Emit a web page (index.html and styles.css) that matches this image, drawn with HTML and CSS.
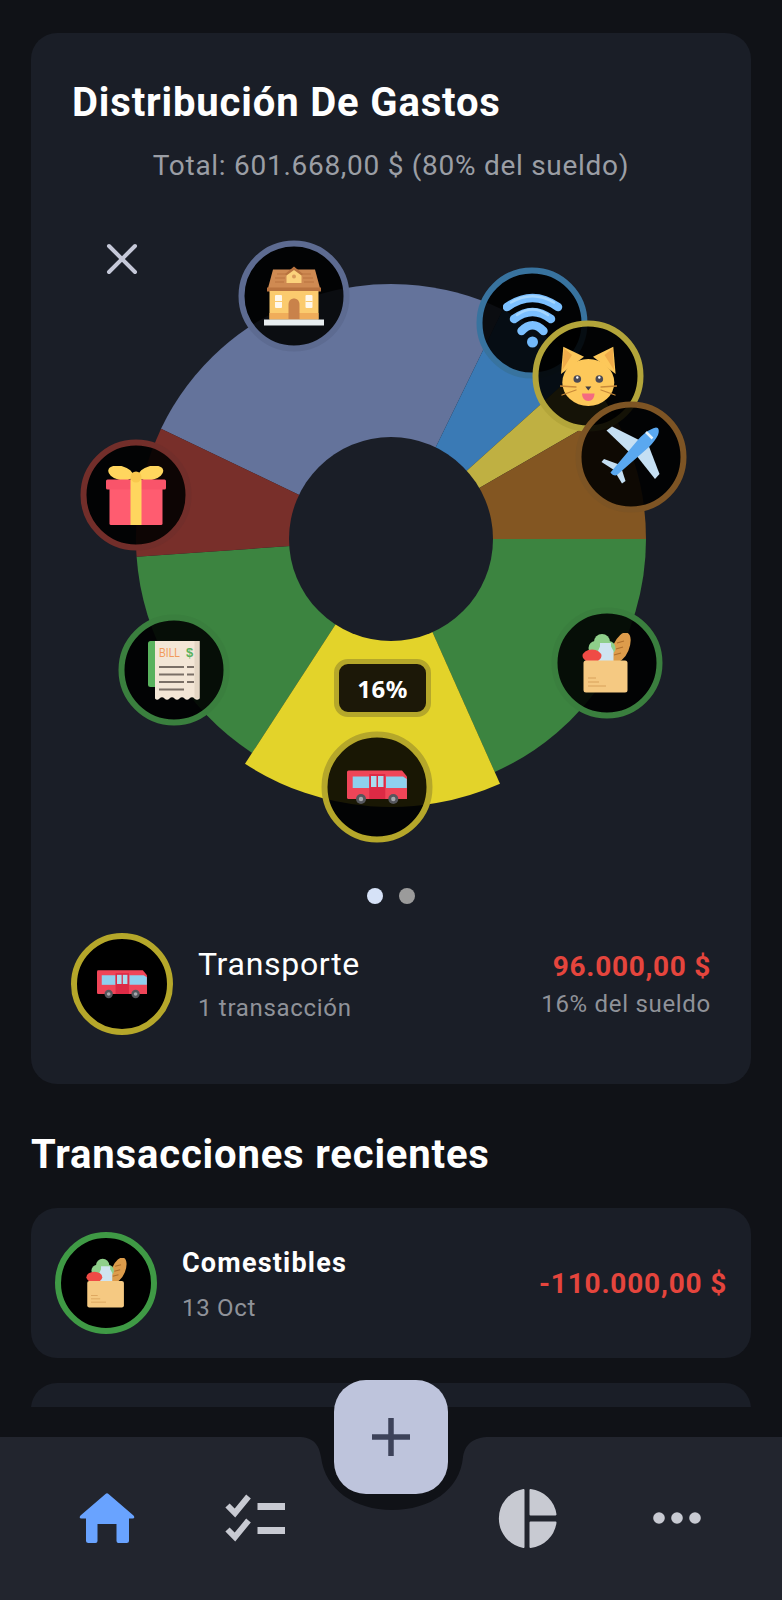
FILE: index.html
```html
<!DOCTYPE html>
<html lang="es">
<head>
<meta charset="utf-8">
<title>Distribución De Gastos</title>
<link rel="stylesheet" href="styles.css">
</head>
<body>
<svg class="defs" width="0" height="0" aria-hidden="true">
  <symbol id="i-house" viewBox="0 0 60 60">
    <path d="M9 3.500H51L56.500 24H3.500Z" fill="#cf8a52"/>
    <path d="M3 21.500H57V25.500H3Z" fill="#b9733f"/>
    <path d="M13 8H22M11 12H21M11 16H20M38 8H47M39 12H49M40 16H50" stroke="#b9733f" stroke-width="1.200"/>
    <rect x="5.500" y="25" width="49" height="28.500" fill="#fbcb6e"/>
    <rect x="5.500" y="47" width="49" height="6.500" fill="#f0ad5a"/>
    <path d="M22.500 17V7.500L30 1.500L37.500 7.500V17Z" fill="#fbd27c"/>
    <path d="M21 8L30 0.500L39 8L37.500 9.500L30 4L22.500 9.500Z" fill="#b9733f"/>
    <circle cx="30" cy="10.500" r="2" fill="#d99a5a"/>
    <path d="M24.500 53.500V38.500C24.500 30.500 35.500 30.500 35.500 38.500V53.500Z" fill="#c9824a"/>
    <rect x="11" y="29" width="7" height="13" rx="1" fill="#fff8ec"/>
    <rect x="41.500" y="29" width="7" height="13" rx="1" fill="#fff8ec"/>
    <path d="M11 35.500H18M41.500 35.500H48.500" stroke="#fbcb6e"/>
    <rect x="0" y="53.500" width="60" height="6" fill="#e8edf0"/>
  </symbol>
  <symbol id="i-gift" viewBox="0 0 60 60">
    <ellipse cx="14.500" cy="7" rx="12.500" ry="7" transform="rotate(14 14.500 7)" fill="#ffd65e"/>
    <ellipse cx="45" cy="7" rx="12.500" ry="7" transform="rotate(-14 45 7)" fill="#ffd65e"/>
    <rect x="3.500" y="22" width="53" height="37" rx="1.500" fill="#ff5c70"/>
    <rect x="0" y="13.500" width="60" height="10" rx="1.500" fill="#f9546a"/>
    <rect x="24.500" y="12" width="11" height="47" fill="#ffd65e"/>
    <circle cx="30" cy="11" r="5.500" fill="#f9c84e"/>
  </symbol>
  <symbol id="i-wifi" viewBox="0 0 60 60">
    <g fill="none" stroke="#7cc0ff" stroke-width="8.500" stroke-linecap="round">
      <path d="M4 17Q29.500 -1 55 17"/>
      <path d="M11 29Q29.500 15 48 29"/>
      <path d="M18.500 41Q29.500 29.500 40.500 41"/>
    </g>
    <g fill="none" stroke="#a4d6ff" stroke-width="2.500" stroke-linecap="round">
      <path d="M8 12.500Q29.500 0 51 12.500"/>
      <path d="M14 25Q29.500 14 45 25"/>
    </g>
    <circle cx="29.500" cy="52" r="5.500" fill="#72b9fb"/>
  </symbol>
  <symbol id="i-cat" viewBox="0 0 57 60">
    <path d="M3.300 0.700L1 28L24 10.700Z" fill="#fdc85a"/>
    <path d="M53.300 0.700L55.600 28L33 10.700Z" fill="#fdc85a"/>
    <path d="M3.800 2L2.500 24L12 9Z" fill="#f0ac4a"/>
    <path d="M52.800 2L54 24L44.500 9Z" fill="#f0ac4a"/>
    <ellipse cx="28.300" cy="36.500" rx="26" ry="23.500" fill="#fdc85a"/>
    <circle cx="17.300" cy="33" r="3.800" fill="#4b4a55"/>
    <circle cx="39.300" cy="33" r="3.800" fill="#4b4a55"/>
    <circle cx="17.300" cy="31.500" r="1.200" fill="#fff"/>
    <circle cx="39.300" cy="31.500" r="1.200" fill="#fff"/>
    <path d="M25.300 40.500H31.300L28.300 44.500Z" fill="#3d3b44"/>
    <path d="M22 47.500H34.500C34.500 52 32 55 28.300 55S22 52 22 47.500Z" fill="#f56a80"/>
    <path d="M16 41L0 40M16 44L2 49M41 41L56.500 40M41 44L55 49" stroke="#c98a3a" stroke-width="1.300" stroke-linecap="round"/>
  </symbol>
  <symbol id="i-plane" viewBox="0 0 60 60">
    <path d="M5.500 4.500L11 0.500L42 16L30 28Z" fill="#c5dff3"/>
    <path d="M35 29L47 18L58.500 48L54 53Z" fill="#c5dff3"/>
    <path d="M0.500 36L3 33L18 38.500L13 44Z" fill="#c5dff3"/>
    <path d="M14 46L20 41L24.500 55L21 57.500Z" fill="#c5dff3"/>
    <path d="M55 1.500C58 1.500 58.500 5 57 9C55 13 52 17 48 21L16 49C14 50 11 49 9.500 46.500L36 15C41 9 48 3 55 1.500Z" fill="#5aa8f0"/>
    <path d="M45 6L51.500 12.500" stroke="#e4f1fb" stroke-width="2.500"/>
  </symbol>
  <symbol id="i-groceries" viewBox="0 0 60 60">
    <ellipse cx="45" cy="14.500" rx="8" ry="16" transform="rotate(23 45 14.500)" fill="#dd9c4b"/>
    <path d="M41 10L48 8M40 16L47 14M38 22L45 20" stroke="#b0702c" stroke-width="1.300"/>
    <g fill="#8fcf8a">
      <circle cx="26" cy="9" r="8"/>
      <circle cx="19.500" cy="15" r="7"/>
      <circle cx="32.500" cy="15" r="7"/>
    </g>
    <path d="M24 10H35V13.500L37.500 18V29H22V18L24 13.500Z" fill="#cfe4f0"/>
    <ellipse cx="16" cy="23" rx="9.500" ry="6.500" fill="#ef4b45"/>
    <rect x="7.500" y="27.500" width="44" height="32" rx="2.500" fill="#f5c982"/>
    <path d="M12 45H20M12 49H23M12 53H30" stroke="#d8a15a" stroke-width="1"/>
  </symbol>
  <symbol id="i-bus" viewBox="0 0 60 60">
    <path d="M1.500 13.500H55L60 19.500V42H1.500Q0 42 0 40.500V15Q0 13.500 1.500 13.500Z" fill="#ef4558"/>
    <rect x="5.700" y="19.500" width="16.600" height="11.500" fill="#8ed0ee"/>
    <path d="M39 19.500H56L59.800 22V31H39Z" fill="#8ed0ee"/>
    <rect x="22.300" y="17" width="16" height="25" fill="#dd2a45"/>
    <rect x="24" y="19" width="5.500" height="11" fill="#a9dcef"/>
    <rect x="31" y="19" width="5.500" height="11" fill="#a9dcef"/>
    <circle cx="14" cy="42" r="5" fill="#55565c"/>
    <circle cx="14" cy="42" r="2.200" fill="#a6a8ad"/>
    <circle cx="46.300" cy="42" r="5" fill="#55565c"/>
    <circle cx="46.300" cy="42" r="2.200" fill="#a6a8ad"/>
  </symbol>
</svg>

<main class="screen">
  <section class="card">
    <h1 class="card-title">Distribución De Gastos</h1>
    <p class="card-total">Total: 601.668,00 $ (80% del sueldo)</p>
    <div class="chart">
      <svg class="chart-svg" viewBox="31 220 720 650" width="720" height="650">
        <path class="s-gray" d="M391 539L161 428.800A255 255 0 0 1 502.800 309.800Z"/>
        <path class="s-blue" d="M391 539L502.800 309.800A255 255 0 0 1 580.500 368.400Z"/>
        <path class="s-olive" d="M391 539L580.500 368.400A255 255 0 0 1 611.800 411.500Z"/>
        <path class="s-brown" d="M391 539L611.800 411.500A255 255 0 0 1 646 539Z"/>
        <path class="s-green" d="M391 539L646 539A255 255 0 0 1 494.700 772Z"/>
        <path class="s-green" d="M391 539L252.100 752.900A255 255 0 0 1 136.600 556.800Z"/>
        <path class="s-red" d="M391 539L136.600 556.800A255 255 0 0 1 161 428.800Z"/>
        <path class="s-yellow" d="M391 539L500 783.800A268 268 0 0 1 245 763.800Z"/>
        <circle class="hole" cx="391" cy="539" r="102"/>
        <path class="close" d="M109 246L135 272M135 246L109 272"/>

        <circle class="badge b-gray" cx="294" cy="296" r="52.500"/>
        <use href="#i-house" x="264" y="266" width="60" height="60"/>
        <circle class="badge b-red" cx="136" cy="495" r="52.500"/>
        <use href="#i-gift" x="106" y="466" width="60" height="60"/>
        <circle class="badge b-green" cx="174" cy="670" r="52.500"/>
        <g transform="translate(144 641)">
          <rect x="4" y="0" width="12" height="46" rx="2.500" fill="#59b25e"/>
          <path d="M11 0H55.500V57.500Q53 60 50.500 57.500T45.500 57.500T40.500 57.500T35.500 57.500T30.500 57.500T25.500 57.500T20.500 57.500T15.500 57.500T11 57.500Z" fill="#f3e6d6"/>
          <rect x="50.500" y="0" width="5" height="57.500" fill="#e4d6c4"/>
          <text class="bill-t" x="15" y="16" fill="#f29a5a" textLength="21" lengthAdjust="spacingAndGlyphs">BILL</text>
          <text class="bill-t" x="42" y="16" fill="#59b25e" font-weight="700">$</text>
          <path d="M15 26H40M43 26H50M15 33.500H40M43 33.500H50M15 41H40M43 41H50M15 48.500H40" stroke="#7a6f66" stroke-width="1.800"/>
        </g>
        <circle class="badge b-green" cx="607" cy="663" r="52.500"/>
        <use href="#i-groceries" x="576" y="633" width="60" height="60"/>
        <circle class="badge b-yellow" cx="377" cy="787" r="52.500"/>
        <use href="#i-bus" x="347" y="757" width="60" height="60"/>
        <circle class="badge b-blue" cx="532" cy="323" r="52.500"/>
        <use href="#i-wifi" x="503" y="290" width="60" height="60"/>
        <circle class="badge b-olive" cx="588" cy="376" r="52.500"/>
        <use href="#i-cat" x="560" y="346" width="57" height="60"/>
        <circle class="badge b-brown" cx="631" cy="457" r="52.500"/>
        <use href="#i-plane" x="601" y="426" width="60" height="60"/>
      </svg>
      <div class="pct-pill">16%</div>
    </div>
    <div class="pager">
      <span class="pager-dot is-active"></span>
      <span class="pager-dot"></span>
    </div>
    <div class="detail">
      <div class="avatar av-yellow"><svg class="avatar-icon" width="50" height="50"><use href="#i-bus"/></svg></div>
      <div class="detail-main">
        <div class="detail-name">Transporte</div>
        <div class="detail-sub">1 transacción</div>
      </div>
      <div class="detail-side">
        <div class="detail-amount">96.000,00 $</div>
        <div class="detail-sub">16% del sueldo</div>
      </div>
    </div>
  </section>

  <h2 class="section-title">Transacciones recientes</h2>

  <article class="tx">
    <div class="avatar av-green"><svg class="avatar-icon" width="50" height="50"><use href="#i-groceries"/></svg></div>
    <div class="tx-main">
      <div class="tx-name">Comestibles</div>
      <div class="tx-date">13 Oct</div>
    </div>
    <div class="tx-amount">-110.000,00 $</div>
  </article>
  <article class="tx tx-next"></article>
</main>

<nav class="nav">
  <svg class="notch" viewBox="0 0 782 163" width="782" height="163" aria-hidden="true">
    <path d="M298 0C314 0 319 8 321 20C325 53 355 73 392 73C430 73 460 53 463 20C465 8 472 0 490 0Z"/>
  </svg>
  <svg class="nav-icon" viewBox="0 0 60 60" width="60" height="60">
    <path class="ic-home" d="M28.500 6Q30 4.500 31.500 6L56.500 27.500Q58.500 30.500 55.500 30.500H52V52.500Q52 55 49.500 55H41.500Q39.500 55 39.500 53V36H20.500V53Q20.500 55 18.500 55H11.500Q9 55 9 52.500V30.500H4.500Q1.500 30.500 3.500 27.500Z"/>
  </svg>
  <svg class="nav-icon" viewBox="0 0 60 60" width="60" height="60">
    <path class="ic-check" d="M2.500 17.500L10 25L23.500 8.500M2.500 41.500L10 49L23.500 32.500"/>
    <path class="ic-bar" d="M32.500 15H60V22H32.500ZM32.500 39H60V46H32.500Z"/>
  </svg>
  <span class="nav-gap"></span>
  <svg class="nav-icon nav-pie" viewBox="0 0 60 60" width="60" height="60">
    <path class="ic-pie ic-round" d="M26.500 2A29 29 0 0 0 26.500 59ZM33.500 2A28.500 28.500 0 0 1 58.500 26.500H33.500ZM33.500 59A28.500 28.500 0 0 0 58.500 34.500H33.500Z"/>
  </svg>
  <svg class="nav-icon" viewBox="0 0 60 60" width="60" height="60">
    <circle class="ic-pie" cx="12" cy="30" r="5.800"/>
    <circle class="ic-pie" cx="30" cy="30" r="5.800"/>
    <circle class="ic-pie" cx="48" cy="30" r="5.800"/>
  </svg>
  <button class="fab" type="button" aria-label="Añadir">
    <svg viewBox="0 0 40 40" width="40" height="40"><path class="ic-plus" d="M20 1V39M1 20H39"/></svg>
  </button>
</nav>
</body>
</html>
```
FILE: styles.css
```css
* { box-sizing: border-box; }
html, body { margin: 0; padding: 0; }
body {
  width: 782px;
  height: 1600px;
  overflow: hidden;
  background: #101217;
  font-family: Roboto, "Liberation Sans", sans-serif;
  color: #fff;
}
.defs { display: block; width: 0; height: 0; }
.bill-t { font-family: "Liberation Sans", sans-serif; font-size: 13px; }

.screen {
  height: 1407px;
  overflow: hidden;
  padding: 33px 31px 0;
}
.card {
  height: 1051px;
  padding-top: 47px;
  background: #1a1e27;
  border-radius: 26px;
}
.card-title {
  margin: 0;
  padding-left: 41px;
  font-size: 40px;
  line-height: 46px;
  font-weight: 700;
  letter-spacing: 0.85px;
}
.card-total {
  margin: 20px 0 34px;
  text-align: center;
  font-size: 28px;
  line-height: 40px;
  letter-spacing: 0.72px;
  color: #9b9ea5;
}
.chart {
  position: relative;
  height: 650px;
}
.chart-svg { display: block; overflow: visible; }
.s-gray { fill: #64739b; }
.s-blue { fill: #3a7ab5; }
.s-olive { fill: #bfb042; }
.s-brown { fill: #835622; }
.s-green { fill: #3c8440; }
.s-red { fill: #782f2a; }
.s-yellow { fill: #e3d32a; }
.hole { fill: #1a1e27; }
.close { stroke: #c5c8d8; stroke-width: 4; stroke-linecap: round; fill: none; }
.badge { fill: rgba(0, 0, 0, 0.89); stroke-width: 6; }
.b-gray { stroke: #5d6b91; }
.b-red { stroke: #722e2a; }
.b-green { stroke: #3a7f3e; }
.b-yellow { stroke: #b5a72a; }
.b-blue { stroke: #38739f; }
.b-olive { stroke: #b3a53a; }
.b-brown { stroke: #7d5424; }
.pct-pill {
  position: absolute;
  left: 303px;
  top: 439px;
  width: 97px;
  height: 58px;
  display: flex;
  align-items: center;
  justify-content: center;
  background: #1c1808;
  border: 5px solid #b5a72a;
  border-radius: 14px;
  font-family: "Noto Sans", sans-serif;
  font-weight: 700;
  font-size: 24px;
  letter-spacing: 0.5px;
}

.pager {
  display: flex;
  justify-content: center;
  gap: 16px;
  margin-top: 18px;
}
.pager-dot {
  width: 16px;
  height: 16px;
  border-radius: 50%;
  background: #9b9b9b;
}
.pager-dot.is-active { background: #d6e2f7; }

.detail {
  display: flex;
  align-items: center;
  margin-top: 29px;
  padding: 0 40px;
}
.avatar {
  flex: none;
  width: 102px;
  height: 102px;
  display: flex;
  align-items: center;
  justify-content: center;
  background: #000;
  border: 6px solid;
  border-radius: 50%;
}
.avatar-icon { display: block; }
.av-yellow { border-color: #b5a72a; }
.av-green { border-color: #3f9a45; }
.detail-main { flex: 1; margin-left: 25px; }
.detail-name { font-size: 32px; line-height: 40px; letter-spacing: 0.7px; }
.detail-sub { font-size: 24px; line-height: 32px; letter-spacing: 0.7px; color: #8f9299; }
.detail-main .detail-sub { margin-top: 8px; }
.detail-side { padding-top: 1px; text-align: right; }
.detail-side .detail-sub { margin-top: 3px; }
.detail-amount { font-size: 28px; line-height: 36px; font-weight: 700; letter-spacing: 0.7px; color: #e5453d; }

.section-title {
  margin: 47px 0 29px;
  font-size: 40px;
  line-height: 48px;
  font-weight: 700;
  letter-spacing: 0.83px;
}
.tx {
  display: flex;
  align-items: center;
  height: 150px;
  padding: 0 24px;
  background: #1a1e27;
  border-radius: 26px;
}
.tx-next { margin-top: 25px; }
.tx-main { flex: 1; margin-left: 25px; padding-top: 4px; }
.tx-name { font-size: 27px; line-height: 34px; font-weight: 700; letter-spacing: 1.2px; }
.tx-date { margin-top: 12px; font-size: 24px; line-height: 32px; letter-spacing: 0.7px; color: #8f9299; }
.tx-amount { font-size: 28px; font-weight: 700; letter-spacing: 0.8px; color: #e5453d; }

.nav {
  position: relative;
  margin-top: 30px;
  height: 163px;
  padding: 51px 75px 0 77px;
  display: grid;
  grid-template-columns: 60px 60px 1fr 60px 60px;
  column-gap: 88px;
  align-items: start;
  background: #22252e;
}
.notch { position: absolute; left: 0; top: 0; fill: #101217; }
.nav-icon { position: relative; display: block; }
.nav-pie { left: -2px; }
.ic-home { fill: #69a3ff; }
.ic-check { fill: none; stroke: #c8cad2; stroke-width: 6; }
.ic-bar, .ic-pie { fill: #c8cad2; }
.ic-round { stroke: #c8cad2; stroke-width: 2; stroke-linejoin: round; }
.ic-plus { fill: none; stroke: #3d4259; stroke-width: 5.5; }
.fab {
  position: absolute;
  left: 334px;
  top: -57px;
  width: 114px;
  height: 114px;
  display: flex;
  align-items: center;
  justify-content: center;
  padding: 0;
  border: 0;
  border-radius: 32px;
  background: #bec4dc;
}
```
